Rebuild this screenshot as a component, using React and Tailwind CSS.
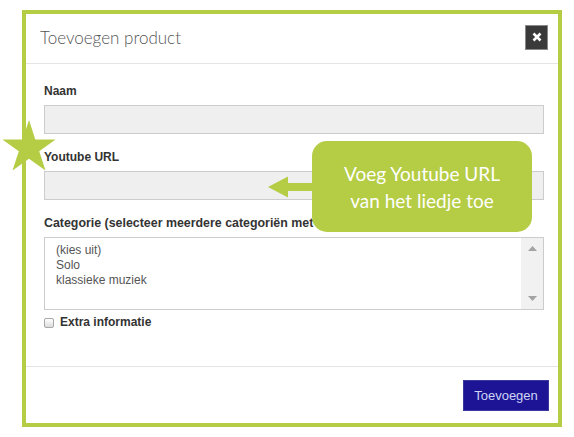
import React from "react";

const GREEN = "#b5cc45";

const Star = () => (
  <svg
    className="absolute left-0 top-[118px]"
    width="60"
    height="56"
    viewBox="0 0 60 56"
  >
    <polygon
      fill={GREEN}
      points="29,2 35.3,21.4 55.6,21.4 39.2,33.3 45.5,52.6 29,40.7 12.5,52.6 18.8,33.3 2.4,21.4 22.7,21.4"
    />
  </svg>
);

const Callout = () => (
  <>
    <svg
      className="absolute left-[267px] top-[176px]"
      width="48"
      height="23"
      viewBox="0 0 48 23"
    >
      <polygon fill={GREEN} points="1,11 21,0.5 21,7 48,7 48,15 21,15 21,21.5" />
    </svg>
    <div className="absolute left-[312px] top-[141px] w-[220px] h-[91px] rounded-[15px] bg-[#b5cc45] flex flex-col items-center justify-center text-white font-['Lato',sans-serif] text-[19px] leading-[27px]">
      <span>Voeg Youtube URL</span>
      <span>van het liedje toe</span>
    </div>
  </>
);

const Field = ({ label }) => (
  <div className="mb-[15px]">
    <label className="block font-bold text-[12px] leading-[17px] text-[#333] mb-[5px]">
      {label}
    </label>
    <div className="h-[29px] border border-[#cccccc] bg-[#efefef]" />
  </div>
);

const App = () => {
  return (
    <div className="relative w-[574px] h-[437px] bg-white pt-[10px] pl-[22px] font-['Liberation_Sans',Arial,sans-serif]">
      <div className="w-[540px] h-[417px] border-4 border-[#b5cc45] bg-white flex flex-col">
        <div className="h-[50px] shrink-0 flex items-center justify-between pl-[14px] pr-[10px] border-b border-[#e5e5e5]">
          <h1 className="font-['Lato',sans-serif] font-light text-[17px] text-[#555] -mt-[2px]">
            Toevoegen product
          </h1>
          <button className="w-[23px] h-[25px] bg-[#3a3a3a] border border-[#8a8a8a] flex items-center justify-center -mt-[3px]">
            <svg width="10" height="10" viewBox="0 0 10 10">
              <path d="M1.5 1.5 L8.5 8.5 M8.5 1.5 L1.5 8.5" stroke="white" strokeWidth="2.6" />
            </svg>
          </button>
        </div>

        <div className="flex-1 pt-[19px] pl-[18px] pr-[14px]">
          <Field label="Naam" />
          <Field label="Youtube URL" />
          <label className="block font-bold text-[12.4px] leading-[17px] text-[#333] mb-[5px] whitespace-nowrap">
            Categorie (selecteer meerdere categoriën met Ctrl-toets)
          </label>
          <div className="h-[73px] border border-[#cccccc] bg-white flex">
            <div className="flex-1 pl-[11px] pt-[5px] text-[12px] leading-[15px] text-[#555]">
              <div>(kies uit)</div>
              <div>Solo</div>
              <div>klassieke muziek</div>
            </div>
            <div className="w-[22px] bg-[#f1f1f1] flex flex-col items-center justify-between py-[8px]">
              <svg width="9" height="5" viewBox="0 0 9 5">
                <polygon points="0,5 4.5,0 9,5" fill="#a3a3a3" />
              </svg>
              <svg width="9" height="5" viewBox="0 0 9 5">
                <polygon points="0,0 9,0 4.5,5" fill="#a3a3a3" />
              </svg>
            </div>
          </div>
          <div className="flex items-center mt-[4px]">
            <div className="w-[10px] h-[10px] rounded-[2px] border border-[#a8a8a8] bg-gradient-to-b from-white to-[#dcdcdc]" />
            <span className="ml-[6px] font-bold text-[12px] leading-[17px] text-[#333]">
              Extra informatie
            </span>
          </div>
        </div>

        <div className="h-[57px] shrink-0 border-t border-[#e5e5e5] flex justify-end items-start pt-[13px] pr-[9px]">
          <button className="w-[86px] h-[31px] bg-[#1c1494] border border-[#3b3a9c] text-[#cfd5f5] text-[13px]">
            Toevoegen
          </button>
        </div>
      </div>

      <Star />
      <Callout />
    </div>
  );
};

export default App;
